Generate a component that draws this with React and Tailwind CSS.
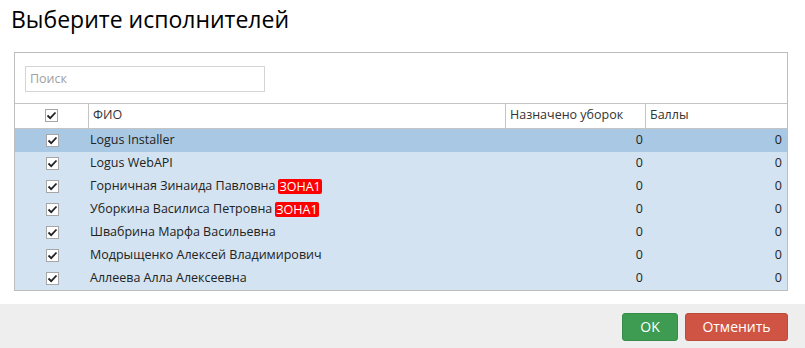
import React from 'react';

const rows = [
  { name: 'Logus Installer', selected: true },
  { name: 'Logus WebAPI' },
  { name: 'Горничная Зинаида Павловна', zone: 'ЗОНА1' },
  { name: 'Уборкина Василиса Петровна', zone: 'ЗОНА1' },
  { name: 'Швабрина Марфа Васильевна' },
  { name: 'Модрыщенко Алексей Владимирович' },
  { name: 'Аллеева Алла Алексеевна' },
];

function Check() {
  return (
    <span className="flex h-[13px] w-[13px] items-center justify-center border border-[#a6a6a6] bg-white">
      <svg width="11" height="11" viewBox="0 0 11 11">
        <path d="M1.5 5.5 L4.2 8.2 L9.5 2.5" fill="none" stroke="#222" strokeWidth="1.8" />
      </svg>
    </span>
  );
}

export default function App() {
  return (
    <div className="w-[805px] h-[348px] bg-white text-[#222] font-['Open_Sans',sans-serif] overflow-hidden">
      {/* Title */}
      <h1 className="pl-[11px] pt-[4px] text-[23px] leading-[30px] font-medium text-black">
        Выберите исполнителей
      </h1>

      {/* Grid box */}
      <div className="ml-[14px] mt-[18px] w-[774px] border border-[#bdbdbd]">
        <div className="pl-[10px] pt-[12px] pb-[11px]">
          <input
            placeholder="Поиск"
            className="h-[26px] w-[240px] border border-[#d4d4d4] px-[4px] text-[12.5px] outline-none placeholder:text-[#a0a0a0]"
          />
        </div>

        {/* Header */}
        <div className="flex h-[26px] border-y border-[#c4c4c4] bg-white text-[12.5px] text-[#333]">
          <div className="flex w-[74px] items-center justify-center border-r border-[#c4c4c4]">
            <Check />
          </div>
          <div className="flex w-[417px] items-center border-r border-[#c4c4c4] pl-[4px]">ФИО</div>
          <div className="flex w-[140px] items-center border-r border-[#c4c4c4] pl-[4px]">Назначено уборок</div>
          <div className="flex flex-1 items-center pl-[4px]">Баллы</div>
        </div>

        {/* Rows */}
        {rows.map((r) => (
          <div
            key={r.name}
            className={`flex h-[23px] text-[12.5px] ${r.selected ? 'bg-[#a9c8e3]' : 'bg-[#d3e3f1]'}`}
          >
            <div className="flex w-[74px] items-center justify-center">
              <Check />
            </div>
            <div className="flex w-[418px] items-center pl-[1px]">
              {r.name}
              {r.zone && (
                <span className="ml-[3px] rounded-[2px] bg-[#ff0000] px-[1px] text-[12.5px] leading-[15px] text-white">
                  {r.zone}
                </span>
              )}
            </div>
            <div className="flex w-[141px] items-center justify-end pr-[5px]">0</div>
            <div className="flex flex-1 items-center justify-end pr-[5px]">0</div>
          </div>
        ))}
      </div>

      {/* Footer */}
      <div className="mt-[13px] flex h-[46px] items-center justify-end gap-[7px] bg-[#eeeeee] pr-[17px]">
        <button className="h-[28px] w-[56px] rounded-[3px] border border-[#378c49] bg-[#3d9b52] text-[14px] text-white">
          OK
        </button>
        <button className="h-[28px] w-[103px] rounded-[3px] border border-[#bd4b3c] bg-[#d05443] text-[14px] text-white">
          Отменить
        </button>
      </div>
    </div>
  );
}
